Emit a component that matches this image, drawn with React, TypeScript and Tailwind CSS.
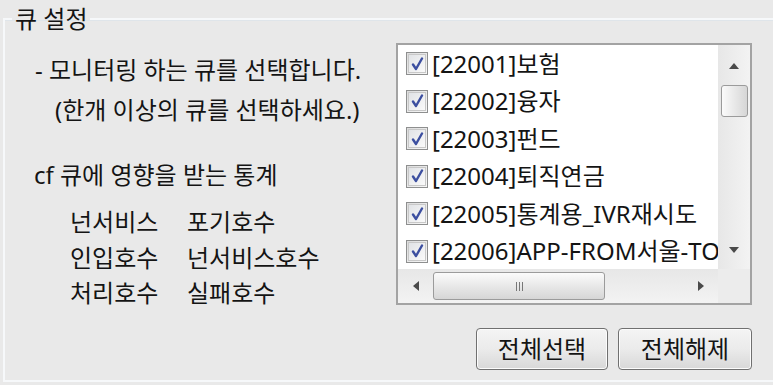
import React from "react";

const font = { fontFamily: '"Noto Sans", "Noto Sans CJK KR", sans-serif' };

const items = [
  "[22001]보험",
  "[22002]융자",
  "[22003]펀드",
  "[22004]퇴직연금",
  "[22005]통계용_IVR재시도",
  "[22006]APP-FROM서울-TO광주",
];

function Check() {
  return (
    <div className="w-[22px] h-[23px] shrink-0 border border-[#8e8f8f] bg-gradient-to-br from-[#dcdcdc] to-[#f7f7f7] flex items-center justify-center">
      <div className="w-[18px] h-[19px] border border-[#c8c8c8] bg-gradient-to-br from-[#e1e3e6] to-[#fafafa] flex items-center justify-center">
        <svg width="13" height="14" viewBox="0 0 13 14">
          <path d="M2 7.5 L5 12 L11 1.5" fill="none" stroke="#3c4fa0" strokeWidth="2.4" strokeLinejoin="round" strokeLinecap="round" />
        </svg>
      </div>
    </div>
  );
}

function Tri({ dir }: { dir: "up" | "down" | "left" | "right" }) {
  const pts = {
    up: "0,6 5,0 10,6",
    down: "0,0 10,0 5,6",
    left: "6,0 6,10 0,5",
    right: "0,0 0,10 6,5",
  }[dir];
  const w = dir === "up" || dir === "down" ? 10 : 6;
  const h = dir === "up" || dir === "down" ? 6 : 10;
  return (
    <svg width={w} height={h} viewBox={`0 0 ${w} ${h}`}>
      <polygon points={pts} fill="#4a4a4a" />
    </svg>
  );
}

export default function App() {
  return (
    <div className="w-[773px] h-[385px] bg-[#e9e9e9] overflow-hidden text-[#141414]" style={font}>
      <fieldset className="ml-[3px] mt-[6px] w-[800px] h-[376px] border-2 border-[#f6f8fa] shadow-[inset_0_1px_0_#dfe5ea] px-0">
        <legend className="ml-[7px] px-[3px] text-[24px] leading-[26px]">큐 설정</legend>
        <div className="flex">
          <div className="w-[391px] text-[24px]">
            <div className="pl-[30px] pt-[20px] leading-[36px]">- 모니터링 하는 큐를 선택합니다.</div>
            <div className="pl-[50px] mt-[4px] leading-[36px]">(한개 이상의 큐를 선택하세요.)</div>
            <div className="pl-[29px] mt-[29px] leading-[36px]">cf 큐에 영향을 받는 통계</div>
            <div className="pl-[65px] mt-[11px] grid grid-cols-[117px_auto] leading-[35.5px]">
              <div>넌서비스</div>
              <div>포기호수</div>
              <div>인입호수</div>
              <div>넌서비스호수</div>
              <div>처리호수</div>
              <div>실패호수</div>
            </div>
          </div>
          <div className="flex flex-col">
            <div className="mt-[11px] w-[356px] h-[262px] border-2 border-[#a3a3a3] bg-white flex flex-col">
              <div className="flex h-[224px]">
                <div className="w-[320px] overflow-hidden pl-[8px] text-[24px]">
                  {items.map((t) => (
                    <div key={t} className="h-[37.5px] flex items-center gap-[4px] whitespace-nowrap">
                      <Check />
                      <span>{t}</span>
                    </div>
                  ))}
                </div>
                <div className="w-[32px] bg-gradient-to-r from-[#e7e7e7] to-[#f3f3f3] flex flex-col items-center">
                  <div className="h-[40px] flex items-center justify-center pt-[2px]">
                    <Tri dir="up" />
                  </div>
                  <div className="w-[27px] h-[32px] rounded-[3px] border border-[#9b9b9b] bg-gradient-to-r from-[#fbfbfb] to-[#d6d6d6]" />
                  <div className="flex-1" />
                  <div className="h-[38px] flex items-center justify-center">
                    <Tri dir="down" />
                  </div>
                </div>
              </div>
              <div className="flex h-[34px]">
                <div className="w-[320px] bg-gradient-to-b from-[#e7e7e7] to-[#f3f3f3] flex items-center">
                  <div className="w-[35px] flex justify-center">
                    <Tri dir="left" />
                  </div>
                  <div className="w-[172px] h-[28px] rounded-[3px] border border-[#9b9b9b] bg-gradient-to-b from-[#fbfbfb] to-[#d6d6d6] flex items-center justify-center gap-[2px]">
                    <div className="w-px h-[9px] bg-[#777]" />
                    <div className="w-px h-[9px] bg-[#777]" />
                    <div className="w-px h-[9px] bg-[#777]" />
                  </div>
                  <div className="flex-1" />
                  <div className="w-[35px] flex justify-center">
                    <Tri dir="right" />
                  </div>
                </div>
                <div className="w-[32px] bg-[#ececec]" />
              </div>
            </div>
            <div className="mt-[23px] flex gap-[10px] pl-[80px]">
              <button className="w-[132px] h-[42px] rounded-[4px] border border-[#707070] bg-gradient-to-b from-[#f4f4f4] via-[#ebebeb] to-[#d8d8d8] text-[24px] leading-none shadow-[inset_0_0_0_1px_#fcfcfc]">
                전체선택
              </button>
              <button className="w-[134px] h-[42px] rounded-[4px] border border-[#707070] bg-gradient-to-b from-[#f4f4f4] via-[#ebebeb] to-[#d8d8d8] text-[24px] leading-none shadow-[inset_0_0_0_1px_#fcfcfc]">
                전체해제
              </button>
            </div>
          </div>
        </div>
      </fieldset>
    </div>
  );
}
